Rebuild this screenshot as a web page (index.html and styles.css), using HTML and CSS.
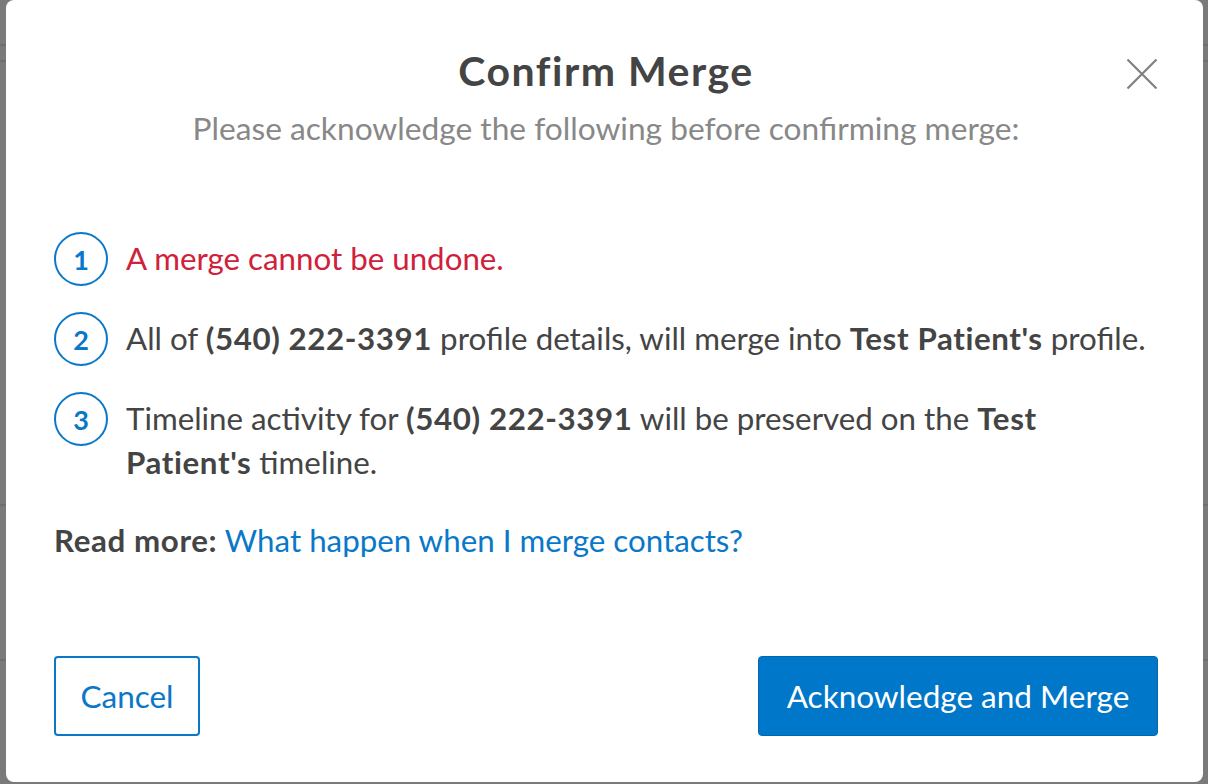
FILE: index.html
```html
<!DOCTYPE html>
<html>
<head>
<meta charset="utf-8">
<link rel="stylesheet" href="styles.css">
</head>
<body>
<div class="backdrop">
  <div class="bg-row r1"></div>
  <div class="bg-row r2"></div>
  <div class="bg-row r3"></div>
  <div class="bg-row r4"></div>
  <div class="modal">
    <div class="modal-header">
      <h1 class="title">Confirm Merge</h1>
      <p class="subtitle">Please acknowledge the following before confirming merge:</p>
      <button class="close" aria-label="Close">
        <svg width="32" height="32" viewBox="0 0 32 32"><path d="M1.5 1.5 L30.5 30.5 M30.5 1.5 L1.5 30.5" stroke="#808080" stroke-width="2.2" fill="none"/></svg>
      </button>
    </div>
    <ol class="steps">
      <li class="step"><span class="num">1</span><p class="step-text warn">A merge cannot be undone.</p></li>
      <li class="step"><span class="num">2</span><p class="step-text">All of <b>(540) 222-3391</b> profile details, will merge into <b>Test Patient's</b> profile.</p></li>
      <li class="step"><span class="num">3</span><p class="step-text">Timeline activity for <b>(540) 222-3391</b> will be preserved on the <b>Test Patient's</b> timeline.</p></li>
    </ol>
    <p class="read-more"><b>Read more:</b> <a href="#">What happen when I merge contacts?</a></p>
    <div class="actions">
      <button class="btn btn-outline">Cancel</button>
      <button class="btn btn-primary">Acknowledge and Merge</button>
    </div>
  </div>
</div>
</body>
</html>
```
FILE: styles.css
```css
* { box-sizing: border-box; }
html, body { margin: 0; padding: 0; }
body {
  width: 1208px;
  height: 784px;
  overflow: hidden;
  font-family: Lato, "Open Sans", sans-serif;
  background: #7a7a7a;
}
.backdrop {
  position: relative;
  width: 1208px;
  height: 784px;
  padding-left: 6px;
}
.bg-row {
  position: absolute;
  left: 0;
  right: 0;
  height: 2px;
  background: #6e6e6e;
}
.r1 { top: 44px; }
.r2 { top: 60px; }
.r3 { top: 504px; }
.r4 { top: 659px; }
.modal {
  position: relative;
  width: 1197px;
  height: 782px;
  background: #fff;
  border-radius: 8px;
  padding: 0 45px 0 48px;
  display: flex;
  flex-direction: column;
  color: #444;
}
.modal-header {
  position: relative;
  text-align: center;
  padding-top: 49px;
}
.title {
  margin: 0;
  font-size: 41px;
  line-height: 44px;
  letter-spacing: 1.5px;
  font-weight: 700;
  color: #444;
}
.subtitle {
  margin: 15px 0 0;
  font-size: 31.7px;
  line-height: 40px;
  color: #888;
}
.close {
  position: absolute;
  top: 58px;
  right: 0;
  width: 32px;
  height: 32px;
  padding: 0;
  border: 0;
  background: none;
}
.close svg { display: block; }
.steps {
  list-style: none;
  margin: 88px 0 0;
  padding: 0;
  display: flex;
  flex-direction: column;
  gap: 36px;
}
.step {
  display: flex;
  align-items: flex-start;
  gap: 18px;
  font-size: 31.3px;
  line-height: 44px;
}
.step-text { margin: 0; }
.num {
  flex: none;
  width: 54px;
  height: 54px;
  margin: -4px 0 -6px;
  border: 2px solid #0a78c8;
  border-radius: 50%;
  display: flex;
  align-items: center;
  justify-content: center;
  color: #0a78c8;
  font-weight: 700;
  font-size: 27px;
  line-height: 1;
}
.step-text b, .read-more b { font-weight: 700; letter-spacing: 0.6px; }
.warn { color: #d0213a; }
.read-more {
  margin: 34px 0 0;
  font-size: 31.3px;
  line-height: 44px;
}
.read-more a { color: #0a78c8; text-decoration: none; }
.actions {
  margin-top: 94px;
  display: flex;
  justify-content: space-between;
}
.btn {
  font-family: inherit;
  font-size: 31.5px;
  height: 80px;
  border-radius: 4px;
  cursor: pointer;
  padding: 0;
}
.btn-outline {
  width: 146px;
  background: #fff;
  border: 2px solid #0a78c8;
  color: #0a78c8;
}
.btn-primary {
  width: 400px;
  background: #0077c8;
  border: 1px solid #0068b0;
  color: #fff;
}
```
